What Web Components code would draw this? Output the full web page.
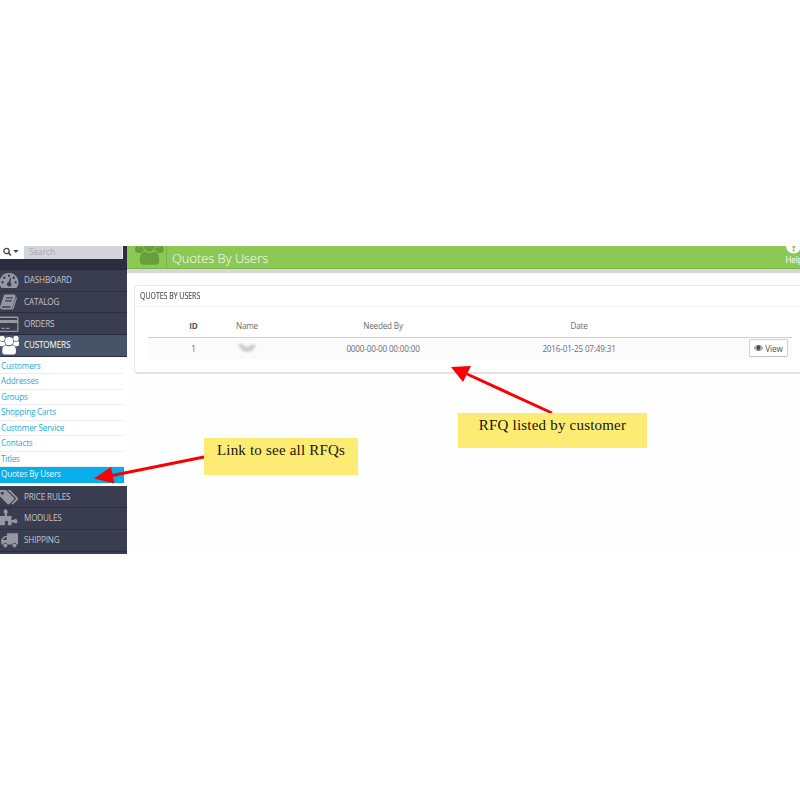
<!DOCTYPE html>
<html lang="en"><head><meta charset="utf-8"><title>Quotes By Users</title>
<style>html,body{margin:0;background:#fff}body{width:800px;height:800px;overflow:hidden;font-family:"Open Sans",sans-serif}</style></head>
<body>
<quote-app></quote-app>
<script>
const define=(name,html,setup)=>customElements.define(name,class extends HTMLElement{
  connectedCallback(){
    if(this.shadowRoot)return;
    const t=document.createElement('template');
    t.innerHTML=html;
    this.attachShadow({mode:'open'}).append(t.content.cloneNode(true));
    if(setup)setup(this,this.shadowRoot);
  }
});

const users='<circle cx="2.200" cy="3.400" r="2.700"/><circle cx="16" cy="3.400" r="2.700"/><path d="M0 6Q2 7.500 4.200 6.200Q4.400 8.200 5.600 9.400Q4 9.800 3 11.200H1Q-1 11 -1 9Q-1 7 0 6ZM18.200 6Q16.200 7.500 14 6.200Q13.800 8.200 12.600 9.400Q14.200 9.800 15.200 11.200H17.200Q19.200 11 19.200 9Q19.200 7 18.200 6Z"/><circle cx="9.100" cy="6.200" r="4.100"/><path d="M5.600 10.200Q9.100 12.300 12.600 10.200Q16 10.800 16 16Q16 19.500 13.500 19.500H4.700Q2.200 19.500 2.200 16Q2.200 10.800 5.600 10.200Z"/>';
const icons={
 dashboard:'<path fill-rule="evenodd" d="M9 3A9.300 9.300 0 0 0 1.500 18H16.500A9.300 9.300 0 0 0 9 3ZM9 4.500a1.200 1.200 0 1 1 0 2.400a1.200 1.200 0 1 1 0-2.400ZM4.300 6.500a1.200 1.200 0 1 1 0 2.400a1.200 1.200 0 1 1 0-2.400ZM13.800 6.500a1.200 1.200 0 1 1 0 2.400a1.200 1.200 0 1 1 0-2.400ZM2.500 11a1.200 1.200 0 1 1 0 2.400a1.200 1.200 0 1 1 0-2.400ZM15.600 11a1.200 1.200 0 1 1 0 2.400a1.200 1.200 0 1 1 0-2.400ZM10.200 8L8.600 12A2.300 2.300 0 1 0 10.400 12.300L11.200 8.300Z"/>',
 catalog:'<path fill-rule="evenodd" d="M5 2.500H14Q16 2.800 15.500 5L12.500 15.500Q12 17.500 10 17.500H2Q-.5 17 .2 14.500L3.500 4.500Q4 2.700 5 2.500ZM6.300 5.300L5.900 6.500H12.600L13 5.300ZM5.400 8.200L5 9.400H11.700L12.100 8.200ZM2.200 14.200L1.800 15.800H10.200L10.800 14.200Z"/><path d="M16.500 5.500L13.400 16L11.800 18" fill="none" stroke="currentColor" stroke-width="1.100"/>',
 orders:'<path fill-rule="evenodd" d="M0 2.500H17Q18.500 2.500 18.500 4V16.500Q18.500 18 17 18H0ZM0 4V6H17.200V4ZM0 9V16.800H17.200V9Z"/><path d="M1.500 13.800H4.500V15H1.500ZM5.700 13.800H9.500V15H5.700Z"/>',
 customers:users,
 tags:'<path fill-rule="evenodd" d="M0 3H6L14 11Q14.500 12 13.800 12.800L9.500 17Q8.500 17.800 7.500 17L-1 8.500V4ZM2.300 4.800a1.500 1.500 0 1 0 .01 0Z"/><path d="M7.500 3H10L17.800 10.800Q18.500 12 17.500 13L12.800 17.500L11.500 16.500L15.500 12.500Q16 11.500 15.500 10.800Z"/>',
 modules:'<path d="M0 8H4.800V6Q3.300 4.500 3.800 2.500Q5 .5 7 2Q8.600 4 7 6V8H11.500V12H13.500Q15.500 10.200 17.200 12V14.800Q15.500 16 13.500 14.600H11.500V17.300H7.800V15.500Q9 13.200 6.500 12.800Q3.800 13.200 5 15.500V17.300H0Z"/>',
 shipping:'<path fill-rule="evenodd" d="M7 3.200H18V14.500H16.800A2.400 2.400 0 0 0 12.200 14.500H7.700A2.400 2.400 0 0 0 3.100 14.500H1.200V9.500L4.500 6H7ZM5.200 7.300L2.800 10H6.700V7.300Z"/><circle cx="5.400" cy="15.600" r="2"/><circle cx="14.500" cy="15.600" r="2"/>'
};

define('nav-row',`<style>:host{display:flex;align-items:center;height:20.700px;border-bottom:1px solid #2b2e40;background:#3a3d4f;color:#c3c4cc;font-size:8.150px;letter-spacing:-.15px;line-height:12px;white-space:nowrap}
:host([active]){background:#46546a;color:#fff}
svg{width:19px;height:20px;margin-right:5px;fill:currentColor;color:#9597a3;flex:none;overflow:visible}
:host([active]) svg{color:#fff}</style><svg viewBox="0 0 19 20"></svg><span><slot></slot></span>`,
(el,r)=>{r.querySelector('svg').innerHTML=icons[el.getAttribute('icon')]});

define('sub-link',`<style>:host{display:block;box-sizing:border-box;width:124px;height:15.480px;border-bottom:1px solid #eeeef1;padding-left:1px;color:#27a9d6;font-size:8.150px;letter-spacing:-.19px;line-height:14px;white-space:nowrap}
:host([active]){background:#08aee9;color:#e8faff;border-color:#08aee9}</style><slot></slot>`);

define('search-bar',`<style>:host{display:flex;box-sizing:border-box;height:24px;padding-bottom:10px;background:#2b2e3f;border-bottom:1px solid #232637}
.pick{width:24px;background:#fff;color:#454552}svg{display:block}
.field{box-sizing:border-box;width:99px;border-right:1px solid #eee;background:#d3d4dc;color:#a5a6b1;font-size:8.200px;line-height:11px;padding-left:5px}</style>
<div class="pick"><svg width="24" height="13"><g fill="none" stroke="currentColor" stroke-width="1.300"><circle cx="6.500" cy="5" r="2.700"/><path d="M8.500 7L11 9.500" stroke-width="1.600"/></g><path d="M13.200 4H18.600L15.900 7Z" fill="currentColor"/></svg></div><div class="field">Search</div>`);

define('side-nav',`<style>:host{display:flex;flex-direction:column;width:127px;height:308px;background:#3a3d4f;flex:none;overflow:hidden}
.sub{box-sizing:border-box;height:129.700px;padding-top:2.200px;background:#fff;flex:none}search-bar,nav-row{flex:none}</style>
<search-bar></search-bar><nav-row icon="dashboard">DASHBOARD</nav-row><nav-row icon="catalog">CATALOG</nav-row><nav-row icon="orders">ORDERS</nav-row><nav-row icon="customers" active>CUSTOMERS</nav-row>
<div class="sub"><sub-link>Customers</sub-link><sub-link>Addresses</sub-link><sub-link>Groups</sub-link><sub-link>Shopping Carts</sub-link><sub-link>Customer Service</sub-link><sub-link>Contacts</sub-link><sub-link>Titles</sub-link><sub-link active>Quotes By Users</sub-link></div>
<nav-row icon="tags">PRICE RULES</nav-row><nav-row icon="modules">MODULES</nav-row><nav-row icon="shipping">SHIPPING</nav-row>`);

define('page-head',`<style>:host{display:flex;box-sizing:border-box;height:27px;background:#8bc954;border-bottom:4px solid #d8d6dc;box-shadow:inset 0 -1px #79b446;color:#fff;overflow:hidden}
.icon{width:39px;border-right:1px solid #79b545;color:#669f3b;flex:none}.icon svg{display:block;margin-left:8px}
h1{margin:0 0 0 5px;font-weight:300;font-size:12.850px;line-height:25px;white-space:nowrap;flex:1}
.help{display:flex;flex-direction:column;align-items:center;width:20px;margin-right:-4px;font-size:8.100px;letter-spacing:-.15px;line-height:11px}.help svg{display:block}</style>
<div class="icon"><svg width="30" height="23" viewBox="0 0 30 23" fill="currentColor"><g transform="translate(1.500 -9) scale(1.420)">${users}</g></svg></div><h1>Quotes By Users</h1><div class="help"><svg width="16" height="8"><circle cx="7.500" cy="0" r="7.500" fill="#fff"/><path d="M9 0L7.600 1V2.500M7.600 3.500V5.200" stroke="#82b952" stroke-width="2" fill="none"/></svg><span>Help</span></div>`);

define('view-button',`<style>:host{display:flex;box-sizing:border-box;width:39px;height:18px;border:1px solid #d0d0d5;border-bottom-color:#bdbdc4;border-radius:2px;background:#fff;align-items:center;justify-content:center;gap:2px;color:#4c4c54;font-size:8.150px;letter-spacing:-.1px;line-height:15px}</style><svg width="9" height="8"><path d="M.3 4Q4.500-1 8.700 4Q4.500 9 .3 4Z" fill="none" stroke="currentColor" stroke-width=".9"/><circle cx="4.500" cy="3.800" r="2.200" fill="currentColor"/></svg><slot></slot>`);

define('quote-table',`<style>:host{display:block;margin:8px 8px 0 13px;color:#6b6b72;font-size:8.150px;letter-spacing:-.18px}
.row{display:grid;grid-template-columns:47px 60px 212px 180px 1fr;padding:0 4px 0 22px;height:22px;align-items:center;justify-items:center;white-space:nowrap;background:#fbfbfc}
.head{height:21.500px;background:#fff;border-bottom:1px solid #addbe2}.body{height:21px}b{color:#55555c;letter-spacing:0}view-button{justify-self:end}
.smudge{width:18px;height:9px;overflow:visible}</style>
<div class="row head"><b>ID</b><span>Name</span><span>Needed By</span><span>Date</span></div>
<div class="row body"><span>1</span><svg class="smudge" viewBox="0 0 18 9"><defs><filter id="s"><feGaussianBlur stdDeviation="1"/></filter></defs><path d="M0 0Q4-1 9 3Q14-1 18 1Q15 9 9 8Q3 8 0 0Z" fill="#cfcfd2" filter="url(#s)"/></svg><span>0000-00-00 00:00:00</span><span>2016-01-25 07:49:31</span><view-button>View</view-button></div>`);

define('data-panel',`<style>:host{display:block;box-sizing:border-box;height:89px;margin:12px 0 0 7px;border:1px solid #e8e8ec;border-right:0;border-bottom:2px solid #e2e2e6;border-radius:4px 0 0 4px;background:#fff}
h2{margin:0;height:20px;padding-left:5px;border-bottom:1px solid #f3f3f6;color:#4f4f57;font-size:8.400px;font-weight:400;line-height:20px;white-space:nowrap}
h2 span{display:inline-block;transform:scaleX(.83);transform-origin:0 50%;-webkit-text-stroke:.15px currentColor}</style><h2><span><slot name="title"></slot></span></h2><slot></slot>`);

define('sticky-note',`<style>:host{display:block;box-sizing:border-box;background:#fdec74;color:#17140a;font:15px/25px "Liberation Serif",serif;letter-spacing:.2px;text-align:center;white-space:nowrap}</style><slot></slot>`);

define('quote-app',`<style>:host{display:block;position:relative;width:800px;height:800px;padding-top:246px;box-sizing:border-box;overflow:hidden}
.shell{display:flex;height:308px}main{flex:1;min-width:0;background:#fefefe}
sticky-note,.arrows{position:absolute}.arrows{left:0;top:0}
.one{left:204px;top:438px;width:154px;height:37px;padding-right:0}.two{left:458px;top:413px;width:189px;height:35px}</style>
<div class="shell"><side-nav></side-nav><main><page-head></page-head><data-panel><span slot="title">QUOTES BY USERS</span><quote-table></quote-table></data-panel></main></div>
<svg class="arrows" width="800" height="800" fill="#fb0000"><path d="M204 457L112 475.500" stroke="#fb0000" stroke-width="3"/><path d="M94 478.500L111 467L114.500 483.500Z"/><path d="M552 413L467 374" stroke="#fb0000" stroke-width="3"/><path d="M451 367L471 366L463 382Z"/></svg>
<sticky-note class="one">Link to see all RFQs</sticky-note><sticky-note class="two">RFQ listed by customer</sticky-note>`);
</script>
</body></html>
